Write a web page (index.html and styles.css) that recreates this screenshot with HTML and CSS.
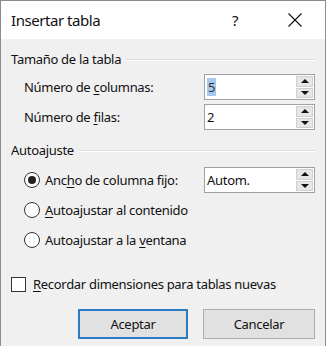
FILE: index.html
```html
<!DOCTYPE html>
<html lang="es">
<head>
<meta charset="utf-8">
<link rel="stylesheet" href="styles.css">
</head>
<body>
<div class="window">
  <div class="titlebar">
    <span class="title">Insertar tabla</span>
    <span class="help">?</span>
    <span class="close">
      <svg width="14" height="14" viewBox="0 0 14 14"><path d="M0.5 0.5 L13.5 13.5 M13.5 0.5 L0.5 13.5" stroke="#111" stroke-width="1.1" fill="none"/></svg>
    </span>
  </div>
  <div class="content">
    <div class="group-head head1"><span>Tamaño de la tabla</span><span class="rule"></span></div>
    <div class="row r-cols">
      <span class="label">Número de <u>c</u>olumnas:</span>
      <div class="spin"><span class="val"><span class="sel">5</span></span><div class="btns"><span class="b up"></span><span class="b down"></span></div></div>
    </div>
    <div class="row r-rows">
      <span class="label">Número de <u>f</u>ilas:</span>
      <div class="spin"><span class="val">2</span><div class="btns"><span class="b up"></span><span class="b down"></span></div></div>
    </div>
    <div class="group-head head2"><span>Autoajuste</span><span class="rule"></span></div>
    <div class="row r-radio1">
      <span class="radio checked"></span>
      <span class="rlabel">Anc<u>h</u>o de columna fijo:</span>
      <div class="spin"><span class="val">Autom.</span><div class="btns"><span class="b up"></span><span class="b down"></span></div></div>
    </div>
    <div class="row r-radio">
      <span class="radio"></span>
      <span class="rlabel"><u>A</u>utoajustar al contenido</span>
    </div>
    <div class="row r-radio">
      <span class="radio"></span>
      <span class="rlabel">Autoajustar a la <u>v</u>entana</span>
    </div>
    <div class="row r-check">
      <span class="check"></span>
      <span class="clabel"><u>R</u>ecordar dimensiones para tablas nuevas</span>
    </div>
    <div class="buttons">
      <button class="btn primary">Aceptar</button>
      <button class="btn">Cancelar</button>
    </div>
  </div>
</div>
</body>
</html>
```
FILE: styles.css
```css
html, body {
  margin: 0;
  padding: 0;
  background: #f0f0f0;
}
.window {
  width: 326px;
  height: 346px;
  box-sizing: border-box;
  border: 1px solid #8c8c8c;
  border-bottom: none;
  background: #f0f0f0;
  font-family: "Noto Sans", "Open Sans", sans-serif;
  font-size: 13px;
  letter-spacing: -0.3px;
  color: #111;
  overflow: hidden;
}
.titlebar {
  height: 38px;
  background: #fff;
  display: flex;
  align-items: center;
  padding-left: 10px;
}
.title {
  font-size: 15px;
  letter-spacing: -0.45px;
  color: #111;
}
.help {
  margin-left: auto;
  font-size: 15px;
  width: 10px;
  margin-right: 46px;
  color: #111;
}
.close {
  display: flex;
  margin-right: 23px;
}
.content {
  padding: 0 10px;
  display: flex;
  flex-direction: column;
}
.group-head {
  height: 20px;
  display: flex;
  align-items: center;
  gap: 5px;
}
.head1 { margin-top: 10px; }
.head2 { margin-top: 10px; }
.rule {
  flex: 1;
  height: 0;
  border-top: 1px solid #dcdcdc;
  border-bottom: 1px solid #fff;
  margin-top: 2px;
}
.row {
  display: flex;
  align-items: center;
  height: 26px;
}
.r-cols { margin-top: 5px; padding-left: 13px; }
.r-rows { margin-top: 4px; padding-left: 13px; }
.r-radio1 { margin-top: 7px; padding-left: 13px; }
.r-radio { margin-top: 4px; padding-left: 13px; }
.r-check { margin-top: 18px; }
.spin {
  margin-left: auto;
  width: 111px;
  height: 26px;
  box-sizing: border-box;
  border: 1px solid #a0a0a0;
  background: #fff;
  display: flex;
  align-items: center;
  padding-left: 2px;
}
.val {
  flex: 1;
}
.sel {
  background: #a6c8ec;
  color: #333;
  padding: 0 1px;
}
.btns {
  display: flex;
  flex-direction: column;
  gap: 1px;
  margin-right: 1px;
  align-self: stretch;
  padding: 1px 0;
}
.b {
  flex: 1;
  width: 17px;
  box-sizing: border-box;
  border: 1px solid #cfcfcf;
  background: #e6e6e6;
  position: relative;
}
.b::after {
  content: "";
  position: absolute;
  left: 50%;
  top: 50%;
  width: 0;
  height: 0;
  border-left: 4px solid transparent;
  border-right: 4px solid transparent;
  transform: translate(-50%, -50%);
}
.up::after { border-bottom: 4px solid #111; }
.down::after { border-top: 4px solid #111; }
.radio {
  width: 16px;
  height: 16px;
  box-sizing: border-box;
  border: 1px solid #333;
  border-radius: 50%;
  background: #fff;
  position: relative;
}
.radio.checked::after {
  content: "";
  position: absolute;
  left: 3px;
  top: 3px;
  width: 8px;
  height: 8px;
  border-radius: 50%;
  background: #222;
}
.rlabel { margin-left: 5px; }
.check {
  width: 15px;
  height: 15px;
  box-sizing: border-box;
  border: 1px solid #333;
  background: #fff;
  margin-left: 0;
}
.clabel { margin-left: 7px; }
.buttons {
  margin-top: 12px;
  display: flex;
  justify-content: flex-end;
  gap: 15px;
}
.btn {
  font-family: inherit;
  font-size: 13px;
  letter-spacing: -0.3px;
  color: #111;
  height: 30px;
  width: 112px;
  background: #e1e1e1;
  border: 1px solid #adadad;
  padding: 0;
}
.btn.primary {
  width: 110px;
  border: 2px solid #2b7cc5;
}
u { text-decoration-thickness: 1px; text-underline-offset: 2px; }
```
